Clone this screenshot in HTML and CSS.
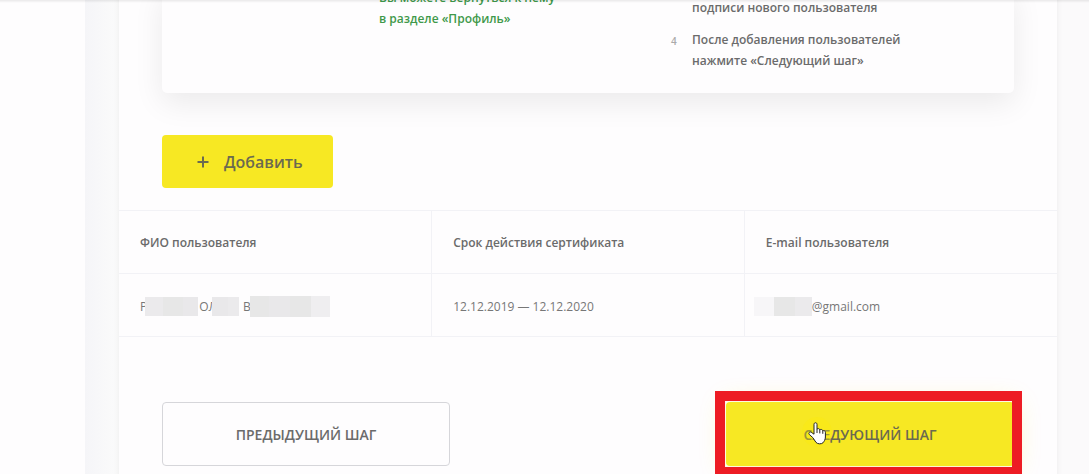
FILE: index.html
```
<!DOCTYPE html>
<html lang="ru">
<head>
    <meta charset="UTF-8">
    <meta name="viewport" content="width=device-width, initial-scale=1.0">
    <title>Пользователи</title>
    <link rel="stylesheet" href="styles.css">
</head>
<body>
    <div class="top-shadow"></div>
    <div class="page">
        <aside class="sidebar"></aside>
        <main class="content">
            <section class="card">
                <div class="notice">
                    <p class="notice-text">Вы можете вернуться к нему<br>в разделе «Профиль»</p>
                    <ol class="steps">
                        <li><span class="num"></span><span>подписи нового пользователя</span></li>
                        <li><span class="num">4</span><span>После добавления пользователей<br>нажмите «Следующий шаг»</span></li>
                    </ol>
                </div>

                <button class="add-button" type="button">
                    <svg width="12" height="12" viewBox="0 0 12 12" aria-hidden="true">
                        <path d="M6 0.5v11M0.5 6h11" stroke="#6b6a50" stroke-width="2" fill="none"/>
                    </svg>
                    Добавить
                </button>

                <table class="users">
                    <thead>
                        <tr>
                            <th>ФИО пользователя</th>
                            <th>Срок действия сертификата</th>
                            <th>E-mail пользователя</th>
                        </tr>
                    </thead>
                    <tbody>
                        <tr>
                            <td>
                                <div class="masked">
                                    <span>Р</span><i class="mask mask-surname"></i><span>ОЛ</span><i class="mask mask-name"></i><span class="middle">В</span><i class="mask mask-middle"></i>
                                </div>
                            </td>
                            <td>12.12.2019 — 12.12.2020</td>
                            <td>
                                <div class="masked">
                                    <i class="mask mask-email"></i><span>@gmail.com</span>
                                </div>
                            </td>
                        </tr>
                    </tbody>
                </table>

                <div class="actions">
                    <button class="prev-button" type="button">ПРЕДЫДУЩИЙ ШАГ</button>
                    <div class="next">
                        <button class="next-button" type="button">СЛЕДУЮЩИЙ ШАГ</button>
                        <div class="highlight"></div>
                        <svg class="cursor" width="40" height="40" viewBox="0 0 40 40" aria-hidden="true">
                            <circle cx="18" cy="19" r="15" fill="#fdea0c" opacity="0.35"/>
                            <path d="M13.8 24.6L10.4 21.6C9 20.2 10.6 18.4 12.2 19.2L15 21.2V11.4C15 9.2 18 9.2 18 11.4V16.2C18.4 15.2 20.6 15.4 20.8 16.8C21.6 16 23.6 16.4 23.8 17.8C24.8 17.2 26.4 17.8 26.4 19.4V24C26.4 26.8 25 28.4 24.2 29.6C22.4 31.4 18.6 31.2 17 29.4Z" fill="#fff" stroke="#222" stroke-width="1" stroke-linejoin="round"/>
                            <path d="M18 16V20M20.8 17V20.4M23.8 18V20.8" stroke="#222" stroke-width="1" fill="none"/>
                        </svg>
                    </div>
                </div>
            </section>
        </main>
    </div>
</body>
</html>
```
FILE: styles.css
```
* {
    box-sizing: border-box;
}

body {
    margin: 0;
    font-family: "Open Sans", "Noto Sans", sans-serif;
    font-size: 12px;
    color: #6b6b6b;
    background: #fefdfe;
}

button {
    font-family: inherit;
    font-weight: 600;
    cursor: pointer;
}

.top-shadow {
    position: fixed;
    top: 0;
    left: 0;
    right: 0;
    height: 3px;
    background: linear-gradient(rgba(0, 0, 0, 0.08), rgba(0, 0, 0, 0));
    z-index: 5;
}

.page {
    display: flex;
    height: 100vh;
    overflow: hidden;
}

.sidebar {
    flex: 0 0 85px;
}

.content {
    flex: 1;
    min-width: 0;
    padding: 0 32px 0 34px;
    background: linear-gradient(90deg, #f5f5f8, #fbfbfb 34px, #fbfafb);
}

.card {
    min-height: 100vh;
    padding-bottom: 40px;
    background: #fefdfe;
    box-shadow: 0 0 6px rgba(0, 0, 0, 0.07);
}

.notice {
    display: flex;
    margin: -13px 43px 0;
    padding: 0 24px 22px 217px;
    border-radius: 5px;
    background: #fefdfe;
    box-shadow: 0 10px 30px rgba(0, 0, 0, 0.08);
    font-weight: 600;
    line-height: 21px;
}

.notice-text {
    flex: 0 0 290px;
    margin: 0;
    color: #3f994a;
}

.steps {
    flex: 1;
    margin: 0;
    padding: 10px 0 0;
    list-style: none;
}

.steps li {
    display: flex;
}

.steps li + li {
    margin-top: 11px;
}

.num {
    flex: 0 0 23px;
    padding-top: 2px;
    padding-left: 2px;
    font-size: 10px;
    color: #aaa;
}

.add-button {
    display: flex;
    align-items: center;
    gap: 15px;
    height: 53px;
    margin: 42px 43px 22px;
    padding: 1px 30px 0 35px;
    border: 0;
    border-radius: 4px;
    background: #f7e823;
    color: #6b6a50;
    font-size: 16px;
}

.users {
    width: 100%;
    border-collapse: collapse;
    table-layout: fixed;
}

.users th,
.users td {
    height: 63px;
    padding: 0 21px;
    border: 1px solid #f2f2f6;
    text-align: left;
}

.users td {
    padding-top: 2px;
    color: #777;
}

.users th:first-child,
.users td:first-child {
    border-left: 0;
}

.users th:last-child,
.users td:last-child {
    border-right: 0;
}

.users th {
    font-weight: 600;
}

.masked {
    display: flex;
    align-items: center;
    height: 21px;
}

.mask {
    height: 19px;
    margin-left: -2px;
}

.mask-surname {
    width: 53px;
    margin-right: 1px;
    background: linear-gradient(90deg, #ebeaec 18px, #e7e7e7 18px 38px, #e9e8ea 38px);
}

.mask-name {
    width: 27px;
    margin-left: -5px;
    background: linear-gradient(90deg, #e9e8ea 16px, #ebeaec 16px);
}

.middle {
    margin-left: 4px;
}

.mask-middle {
    width: 80px;
    height: 21px;
    margin-left: -1px;
    background: linear-gradient(90deg, #e7e7e7 19px, #e9e8ea 19px 40px, #e7e7e7 40px 61px, #efeef0 61px);
}

.mask-email {
    width: 58px;
    margin: 0 0 0 -12px;
    background: linear-gradient(90deg, #f7f6f8 20px, #e7e7e7 20px 41px, #ebeaec 41px);
}

.actions {
    display: flex;
    justify-content: space-between;
    padding: 65px 43px 0;
}

.actions button {
    width: 288px;
    height: 64px;
    border-radius: 4px;
    font-size: 14px;
}

.prev-button {
    border: 1px solid #d6d6da;
    background: #fefdfe;
    color: #6b6b6b;
}

.next {
    position: relative;
}

.next-button {
    display: block;
    border: 0;
    background: #f7e823;
    color: #6b6a50;
    box-shadow: 0 2px 24px rgba(247, 232, 35, 0.35);
}

/* red frame around the next step button */
.highlight {
    position: absolute;
    top: -11px;
    right: -8px;
    bottom: -11px;
    left: -11px;
    border: 10px solid #ed1c24;
    pointer-events: none;
}

.cursor {
    position: absolute;
    top: 11px;
    left: 73px;
}
```
